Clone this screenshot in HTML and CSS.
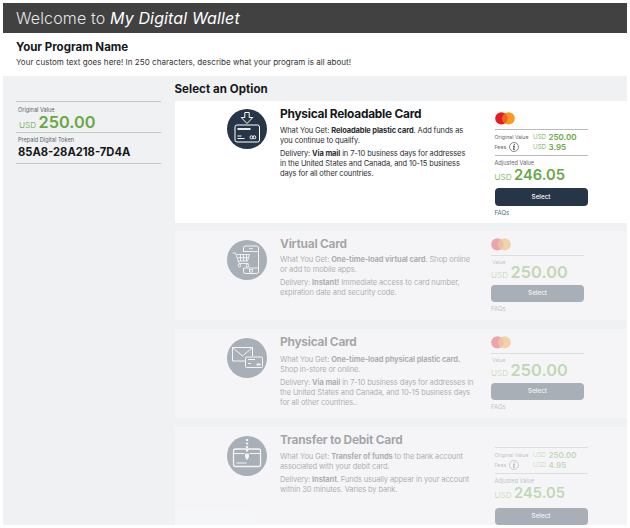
FILE: index.html
```html
<!DOCTYPE html>
<html lang="en">
<head>
<meta charset="utf-8">
<title>My Digital Wallet</title>
<link rel="stylesheet" href="styles.css">
</head>
<body>
<svg width="0" height="0" class="defs">
  <symbol id="mc" viewBox="0 0 20 13"><circle cx="6.4" cy="6.4" r="6.2" fill="#e51b24"/><circle cx="13.6" cy="6.4" r="6.2" fill="#f79a1f"/><path d="M10 1.3a6.2 6.2 0 0 1 0 10.2a6.2 6.2 0 0 1 0-10.2" fill="#f26322"/></symbol>
  <symbol id="info" viewBox="0 0 10 10"><circle cx="5" cy="5" r="4.5" fill="none" stroke="#555" stroke-width=".7"/><path d="M4.1 4.2h1.200L4.600 7.500h1M5.500 2.200L5.300 3.200" fill="none" stroke="#333" stroke-width="1"/></symbol>
</svg>
<header class="topbar">Welcome to <em>My Digital Wallet</em></header>
<section class="program">
  <h1>Your Program Name</h1>
  <p>Your custom text goes here! In 250 characters, describe what your program is all about!</p>
</section>
<div class="body">
  <aside class="side">
    <div class="stat"><label>Original Value</label><div class="money"><i>USD</i><b>250.00</b></div></div>
    <div class="stat"><label>Prepaid Digital Token</label><div class="token">85A8-28A218-7D4A</div></div>
  </aside>
  <main>
    <h2>Select an Option</h2>
    <article class="card c1">
      <svg class="icon" viewBox="0 0 40 40"><circle cx="20" cy="20" r="20" fill="#263646"/><g fill="none" stroke="#fff"><path d="M17.8 3.5h4.4v5h3.6L20 14.5l-5.800-6h3.600z"/><rect x="8" y="16" width="24.500" height="17" rx="2"/><path d="M10.500 20h13" stroke-width="1.800"/><path d="M10.500 27h4M10.500 29.500h7"/><circle cx="24.500" cy="28.300" r="1.500"/><circle cx="27.300" cy="28.300" r="1.500"/></g></svg>
      <div class="copy">
        <h3>Physical Reloadable Card</h3>
        <p>What You Get: <b>Reloadable plastic card</b>. Add funds as<br>you continue to qualify.</p>
        <p>Delivery: <b>Via mail</b> in 7-10 business days for addresses<br>in the United States and Canada, and 10-15 business<br>days for all other countries.</p>
      </div>
      <div class="pay">
        <svg class="mc"><use href="#mc"/></svg>
        <div class="fees">
          <div><span>Original Value</span><i>USD</i><b>250.00</b></div>
          <div><span>Fees <svg class="info"><use href="#info"/></svg></span><i>USD</i><b>3.95</b></div>
        </div>
        <label>Adjusted Value</label>
        <div class="money"><i>USD</i><b>246.05</b></div>
        <button>Select</button>
        <a>FAQs</a>
      </div>
    </article>
    <article class="card c2 off">
      <svg class="icon" viewBox="0 0 40 40"><circle cx="20" cy="20" r="20" fill="#263646"/><g fill="none" stroke="#fff"><path d="M16.500 12V8a2 2 0 0 1 2-2h11a2 2 0 0 1 2 2v23.500a2 2 0 0 1-2 2h-11a2 2 0 0 1-2-2V28"/><path d="M16.500 11.500h15M16.500 28h15M22 8.700h4" stroke-width=".9"/><rect x="22.500" y="29.500" width="3" height="2.500" stroke-width=".8"/><path d="M5.500 13h3l3.500 10.500h9.500M9.500 14.500h13l-2 6.500h-9M10.500 17.700h11M13.500 14.500v6.500M16.500 14.500v6.500M19.500 14.500v6.500" stroke-width=".9"/><circle cx="12.500" cy="25.500" r="1.400"/><circle cx="20.500" cy="25.500" r="1.400"/></g></svg>
      <div class="copy">
        <h3>Virtual Card</h3>
        <p>What You Get: <b>One-time-load virtual card</b>. Shop online<br>or add to mobile apps.</p>
        <p>Delivery: <b>Instant!</b> Immediate access to card number,<br>expiration date and security code.</p>
      </div>
      <div class="pay short">
        <svg class="mc"><use href="#mc"/></svg>
        <label>Value</label>
        <div class="money"><i>USD</i><b>250.00</b></div>
        <button>Select</button>
        <a>FAQs</a>
      </div>
    </article>
    <article class="card c3 off">
      <svg class="icon" viewBox="0 0 40 40"><circle cx="20" cy="20" r="20" fill="#263646"/><g fill="none" stroke="#fff"><path d="M18 23H5.500V9.500h20V18M5.500 9.500l10 8.500 10-8.500"/><rect x="18.500" y="19" width="17" height="10.500" rx="1"/><path d="M21 21.500h7M21 25.500h3" /><path d="M29.500 26.500h4" stroke-width="2"/></g></svg>
      <div class="copy">
        <h3>Physical Card</h3>
        <p>What You Get: <b>One-time-load physical plastic card.</b><br>Shop in-store or online.</p>
        <p>Delivery: <b>Via mail</b> in 7-10 business days for addresses in<br>the United States and Canada, and 10-15 business days<br>for all other countries..</p>
      </div>
      <div class="pay short">
        <svg class="mc"><use href="#mc"/></svg>
        <label>Value</label>
        <div class="money"><i>USD</i><b>250.00</b></div>
        <button>Select</button>
        <a>FAQs</a>
      </div>
    </article>
    <article class="card c4 off">
      <svg class="icon" viewBox="0 0 40 40"><circle cx="20" cy="20" r="20" fill="#263646"/><g fill="none" stroke="#fff"><rect x="6.500" y="13" width="27" height="17.500" rx="2" stroke-width="1.300"/><path d="M6.500 17.500h11M22.500 17.500h11M9.500 27h10"/><path d="M20 3v14" stroke-width="2.200" stroke-dasharray="2 1.500"/><path d="M18.500 18h3v3L20 23.500 18.500 21z" fill="#fff"/></g></svg>
      <div class="copy">
        <h3>Transfer to Debit Card</h3>
        <p>What You Get: <b>Transfer of funds</b> to the bank account<br>associated with your debit card.</p>
        <p>Delivery: <b>Instant</b>. Funds usually appear in your account<br>within 30 minutes. Varies by bank.</p>
      </div>
      <div class="pay">
        <div class="fees">
          <div><span>Original Value</span><i>USD</i><b>250.00</b></div>
          <div><span>Fees <svg class="info"><use href="#info"/></svg></span><i>USD</i><b>4.95</b></div>
        </div>
        <label>Adjusted Value</label>
        <div class="money"><i>USD</i><b>245.05</b></div>
        <button>Select</button>
      </div>
    </article>
  </main>
</div>
</body>
</html>
```
FILE: styles.css
```css
* { box-sizing: border-box; margin: 0; padding: 0; }
body { width: 630px; height: 528px; padding: 3px; background: #fff; font-family: Inter, sans-serif; color: #15171a; overflow: hidden; white-space: nowrap; }
.defs { position: absolute; }
i { font-style: normal; }
.topbar { height: 30px; background: #414141; color: #e6e6e6; font-size: 16px; font-weight: 300; line-height: 30px; padding-left: 13px; letter-spacing: .14px; }
.topbar em { color: #fff; font-weight: 400; }
.program { height: 43px; padding: 6px 0 0 13px; }
.program h1 { font-size: 11.5px; line-height: 16px; font-weight: 700; }
.program p { font-size: 8px; line-height: 12px; margin-top: 1px; color: #333; letter-spacing: .04px; }
.body { display: flex; height: 449px; background: #f0f1f3; overflow: hidden; }
.side { width: 171.500px; padding: 25px 13.500px 0 13px; }
.stat { height: 31px; border-top: 1px solid #c4c6c9; padding: 4px 0 0 2px; }
.stat:last-child { height: 32px; border-bottom: 1px solid #c4c6c9; padding-top: 3px; }
label { display: block; font-size: 5.600px; line-height: 8px; color: #666; }
.money { display: flex; align-items: baseline; color: #67a844; line-height: 18px; }
.money i { font-size: 8.200px; font-weight: 300; margin-right: 2.500px; }
.money b { font-size: 14.700px; font-weight: 600; }
.side .money { padding-left: 1px; margin-top: -1px; }
.side .money b, .short .money b { font-size: 16.300px; }
.token { font-size: 11.200px; font-weight: 700; line-height: 17px; }
main { flex: 1; }
h2 { font-size: 11.500px; line-height: 14px; font-weight: 700; height: 25px; padding-top: 6px; letter-spacing: .06px; }
.card { display: flex; height: 89px; margin-bottom: 9px; background: #fff; padding-left: 52.500px; }
.c1 { height: 122px; margin-bottom: 8px; }
.c4 { height: 100px; }
.off { opacity: .35; }
.icon { width: 40px; height: 40px; margin-top: 8.500px; }
.c1 .icon { margin-top: 8px; }
.copy { width: 214.500px; padding: 5px 0 0 13px; }
h3 { font-size: 11.900px; line-height: 16px; font-weight: 700; margin-bottom: 3px; letter-spacing: -.24px; }
.c1 h3 { margin-bottom: 4px; }
.c3 .copy { padding-top: 5px; }
.c4 .copy { padding-top: 5px; }
.c3 h3 { margin-bottom: 5px; }
.c4 h3 { margin-bottom: 4px; }
.copy p { font-size: 7.500px; line-height: 9.600px; margin-bottom: 4.300px; color: #2b2d30; letter-spacing: -.12px; }
.pay { width: 93px; padding-top: 11px; }
.c1 .pay, .c4 .pay { margin-left: 13px; }
.c4 .pay { padding-top: 15.500px; }
.short { margin-left: 9.500px; padding-top: 7px; }
.mc { display: block; width: 20px; height: 13px; }
.fees { border-top: 1px solid #bbb; border-bottom: 1px solid #bbb; height: 27px; margin: 4px 0 3px; padding-top: 2px; color: #67a844; }
.fees div { display: flex; align-items: center; height: 10.300px; }
.fees span { width: 38.500px; font-size: 5.200px; color: #666; display: flex; align-items: center; gap: 3px; }
.info { width: 10px; height: 10px; }
.fees i { font-size: 6.300px; font-weight: 300; width: 15.500px; }
.fees b { font-size: 8px; font-weight: 600; }
.short label { border-top: 1px solid #bbb; margin-top: 3.500px; padding: 2px 0 0 1px; font-size: 5.200px; }
.pay .money { margin-top: -1px; }
.short .money { margin-top: -3px; }
button { display: block; width: 93px; height: 17.500px; border: 0; border-radius: 4px; background: #263646; color: #fff; font: 500 6.300px Inter, sans-serif; margin-top: 2px; }
.short button { margin-top: 1px; }
.c4 button { margin-top: 4px; }
.short .money b { letter-spacing: .05px; }
.pay a { display: block; font-size: 6px; line-height: 8px; margin-top: 3px; color: #4e6c85; }
```
